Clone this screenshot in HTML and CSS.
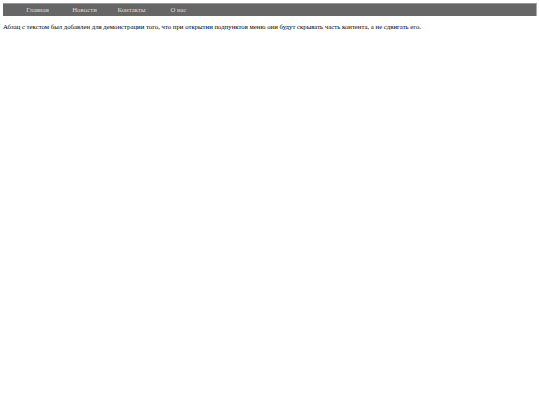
FILE: index.html
```html
<!DOCTYPE html>
<html lang="ru">
<head>
<meta charset="utf-8">
<title>Меню</title>
<link rel="stylesheet" href="styles.css">
</head>
<body>
<nav class="menu">
  <ul class="menu-list">
    <li class="menu-item">Главная</li>
    <li class="menu-item">Новости</li>
    <li class="menu-item">Контакты</li>
    <li class="menu-item">О нас</li>
  </ul>
</nav>
<p class="text">Абзац с текстом был добавлен для демонстрации того, что при открытии подпунктов меню они будут скрывать часть контента, а не сдвигать его.</p>
</body>
</html>
```
FILE: styles.css
```css
html, body {
  background: #fff;
}
body {
  margin: 3px;
  font-family: "Liberation Serif", "Times New Roman", serif;
  font-size: 6.75px;
  color: #000;
}
.menu {
  background: #666;
  border-top: 1px solid #999;
  border-right: 1px solid #aaa;
  height: 12px;
}
.menu-list {
  list-style: none;
  margin: 0;
  padding: 0 0 0 11px;
  display: flex;
  height: 100%;
}
.menu-item {
  width: 47px;
  text-align: center;
  color: #ddd;
  line-height: 12px;
}
.text {
  margin: 6px 0 0;
  line-height: 9px;
}
```
